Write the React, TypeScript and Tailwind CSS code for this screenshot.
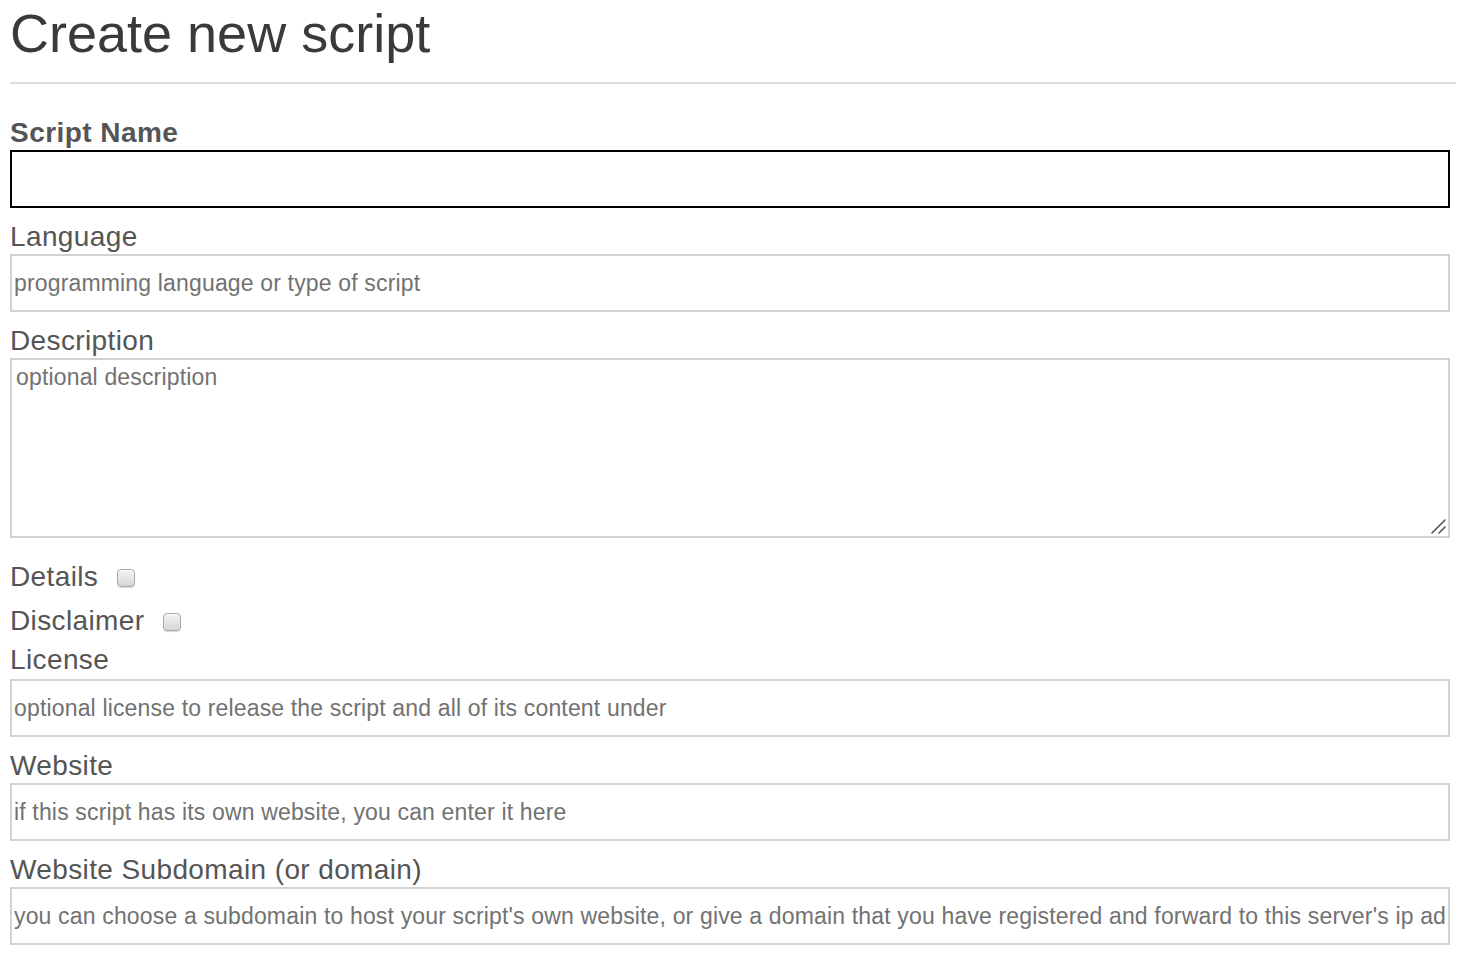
import type { ReactNode } from 'react';

const font = "font-['Liberation_Sans',Arial,Helvetica,sans-serif]";

function FieldLabel({ children, bold }: { children: ReactNode; bold?: boolean }) {
  return (
    <label
      className={
        bold
          ? 'block h-[66px] pt-[33px] text-[28px] leading-[32px] font-bold tracking-[0.45px] text-[#555]'
          : 'block h-[46px] pt-[13px] text-[28px] leading-[32px] tracking-[0.38px] text-[#555]'
      }
    >
      {children}
    </label>
  );
}

function TextInput({ placeholder, focused }: { placeholder?: string; focused?: boolean }) {
  return (
    <input
      type="text"
      placeholder={placeholder}
      className={
        focused
          ? 'block h-[58px] w-[1440px] border-2 border-black bg-white px-[2px] text-[23px] text-[#333] outline-none'
          : 'block h-[58px] w-[1440px] border-2 border-[#d2d2d2] bg-white px-[2px] text-[23px] tracking-[0.16px] text-[#333] outline-none placeholder:text-[#727272]'
      }
    />
  );
}

function CheckRow({ label, className }: { label: string; className: string }) {
  return (
    <div
      className={
        'flex h-[32px] items-center gap-[19px] text-[28px] leading-[32px] tracking-[0.38px] text-[#555] ' + className
      }
    >
      <span>{label}</span>
      <input
        type="checkbox"
        className="mt-[1px] h-[18px] w-[18px] shrink-0 appearance-none rounded-[4px] border border-[#a9a9a9] bg-gradient-to-b from-[#f4f4f4] to-[#d6d6d6] shadow-[inset_0_1px_1px_rgba(255,255,255,0.8),0_1px_1px_rgba(0,0,0,0.15)]"
      />
    </div>
  );
}

export default function App() {
  return (
    <div className={'min-h-[954px] w-[1464px] bg-white pl-[10px] ' + font}>
      <h1 className="h-[82px] pt-[1px] text-[54px] leading-[64px] font-normal text-[#3a3a3a]">
        Create new script
      </h1>
      <hr className="h-[2px] w-[1446px] border-0 bg-[#dedede]" />

      <form onSubmit={(e) => e.preventDefault()}>
        <FieldLabel bold>Script Name</FieldLabel>
        <TextInput focused />

        <FieldLabel>Language</FieldLabel>
        <TextInput placeholder="programming language or type of script" />

        <FieldLabel>Description</FieldLabel>
        <div className="relative w-[1440px]">
          <textarea
            placeholder="optional description"
            className="block h-[180px] w-[1440px] resize-none border-2 border-[#d2d2d2] bg-white px-[4px] pt-[4px] text-[23px] leading-[26px] tracking-[0.16px] text-[#333] outline-none placeholder:text-[#727272]"
          />
          {/* resize grip */}
          <svg
            className="pointer-events-none absolute right-[4px] bottom-[4px]"
            width="16"
            height="16"
            viewBox="0 0 16 16"
          >
            <path d="M2 15 L15 2 M9 15 L15 9" stroke="#555" strokeWidth="1.6" strokeLinecap="round" />
          </svg>
        </div>

        <CheckRow label="Details" className="mt-[23px]" />
        <CheckRow label="Disclaimer" className="mt-[12px]" />

        <label className="block h-[42px] pt-[7px] text-[28px] leading-[32px] tracking-[0.38px] text-[#555]">
          License
        </label>
        <TextInput placeholder="optional license to release the script and all of its content under" />

        <FieldLabel>Website</FieldLabel>
        <TextInput placeholder="if this script has its own website, you can enter it here" />

        <FieldLabel>Website Subdomain (or domain)</FieldLabel>
        <TextInput placeholder="you can choose a subdomain to host your script's own website, or give a domain that you have registered and forward to this server's ip address" />
      </form>
    </div>
  );
}
